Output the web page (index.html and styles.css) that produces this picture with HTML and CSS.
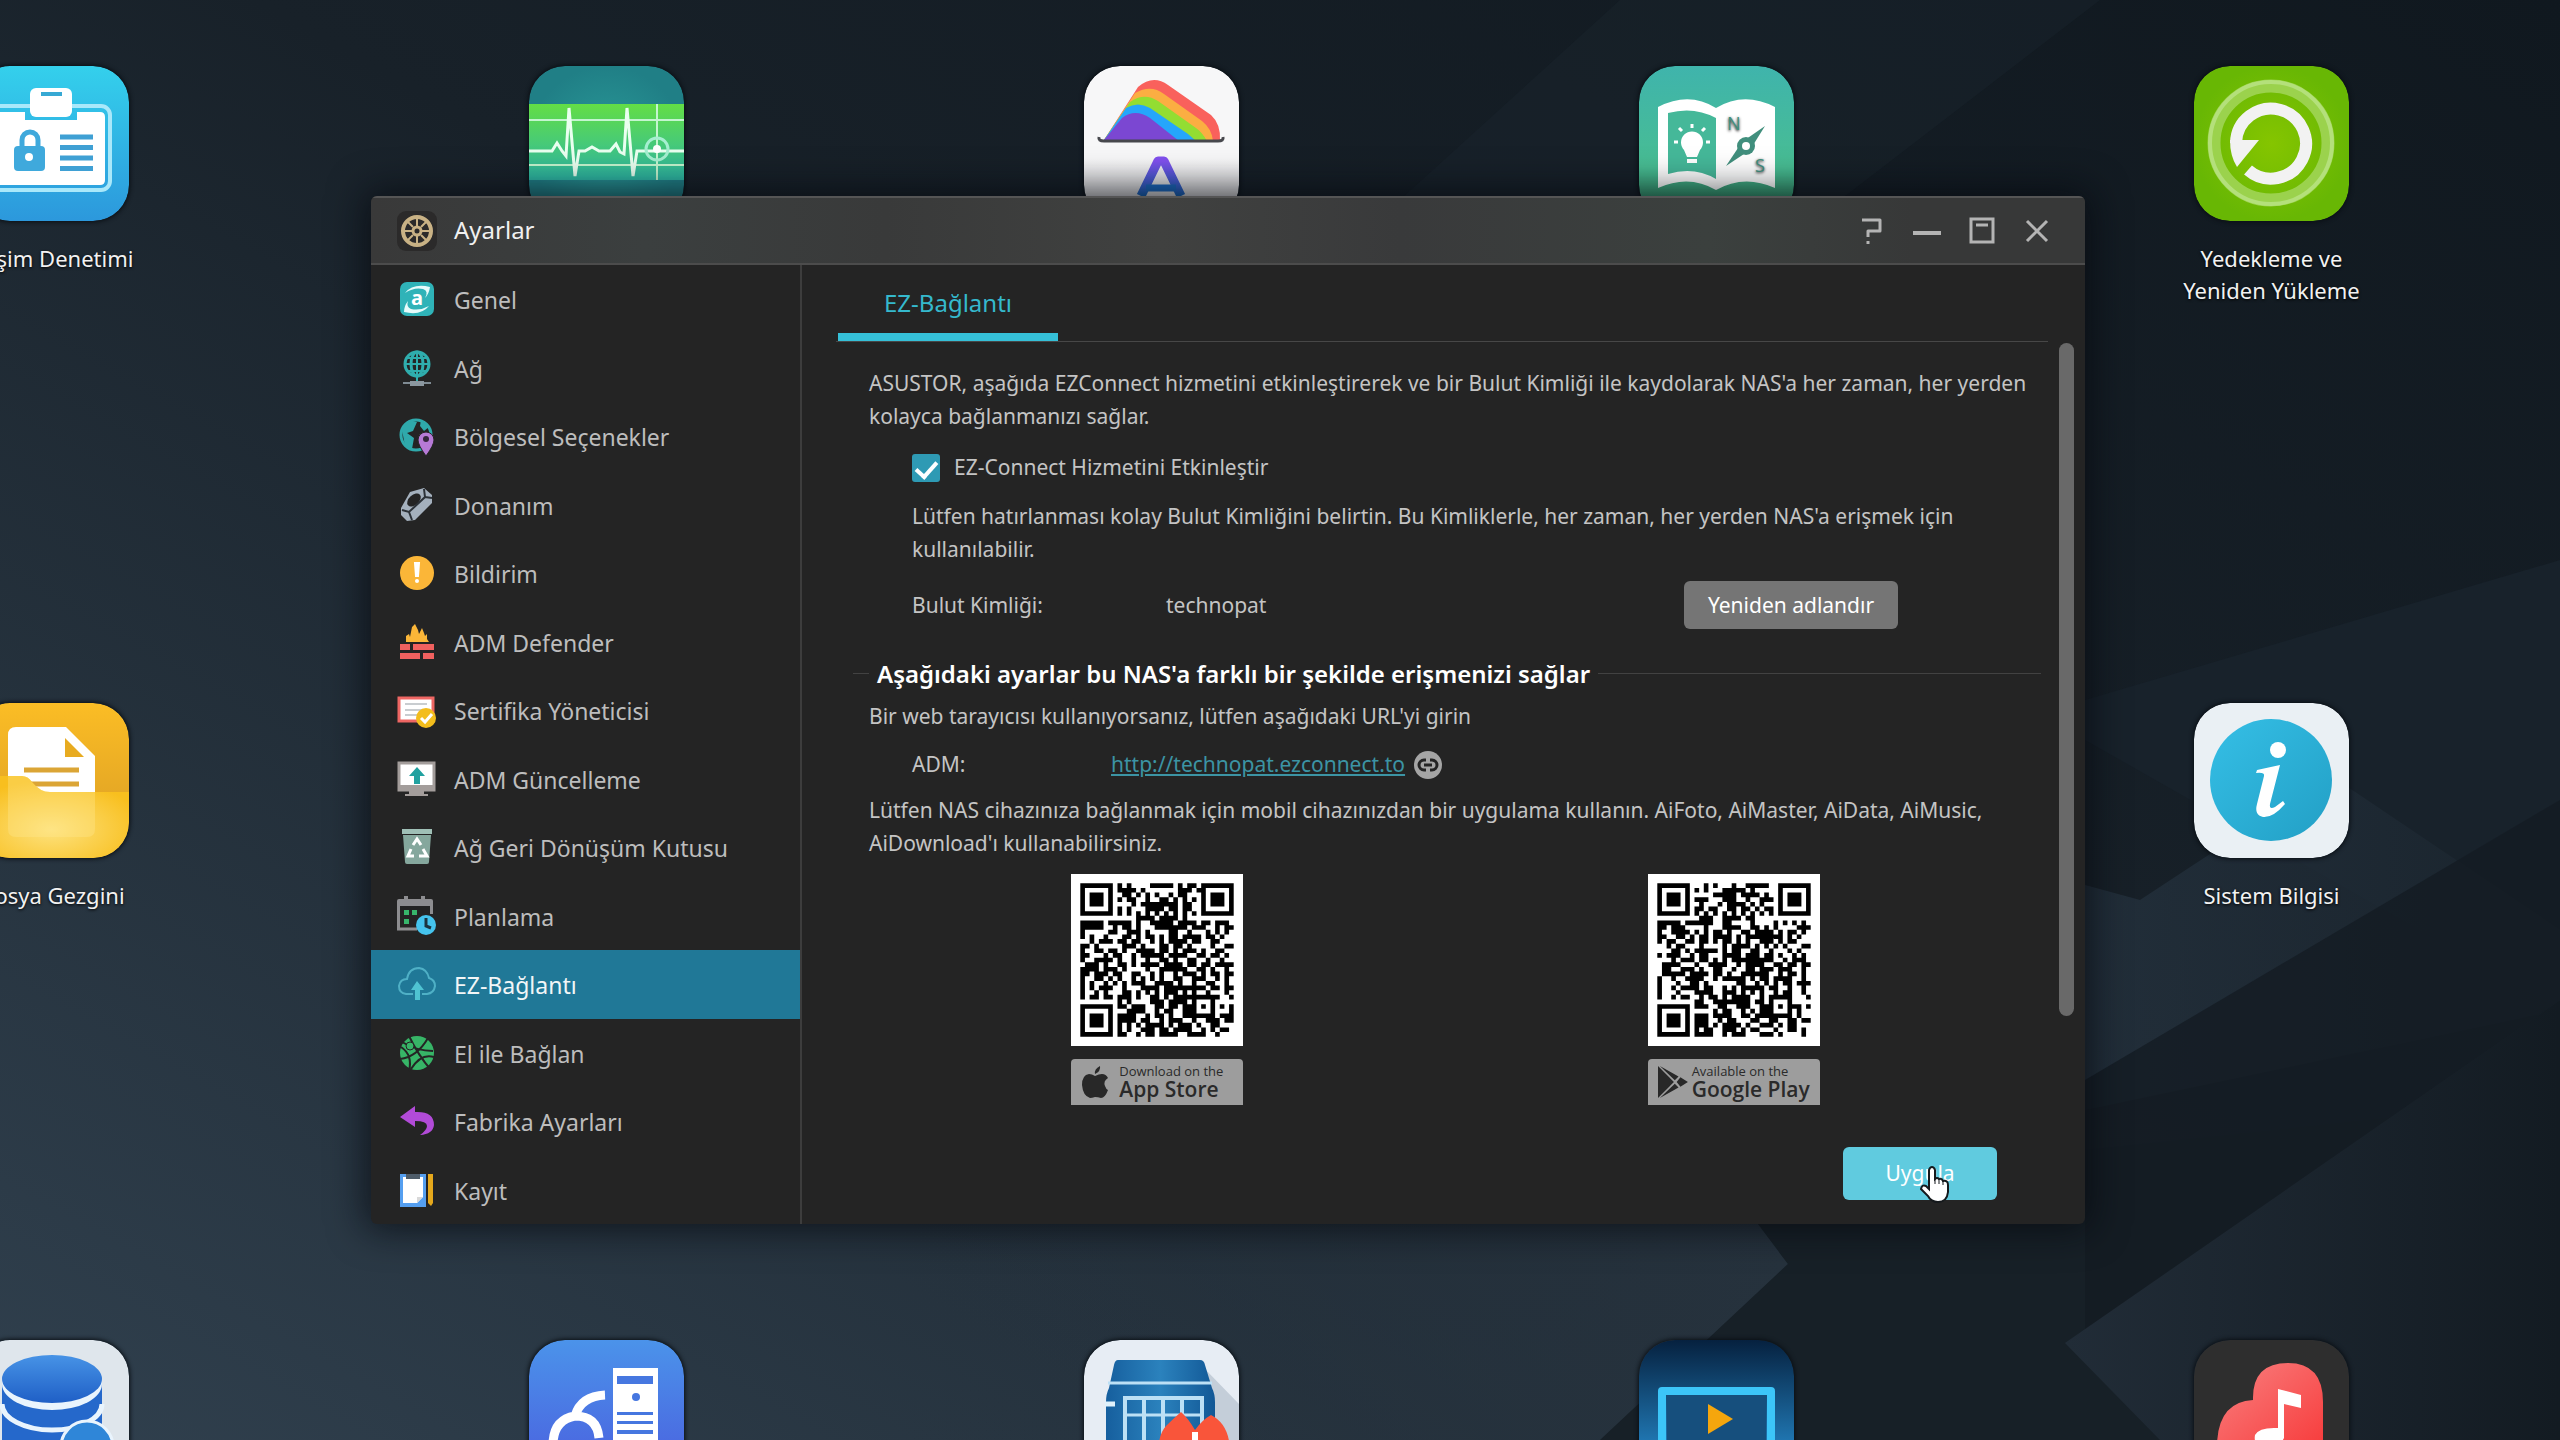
FILE: index.html
```html
<!DOCTYPE html>
<html lang="tr">
<head>
<meta charset="utf-8">
<title>ADM - Ayarlar</title>
<link rel="stylesheet" href="styles.css">
<script src="qr.js" defer></script>
</head>
<body>
<div class="desktop">
  <svg class="wallpaper" viewBox="0 0 2560 1440" preserveAspectRatio="none" aria-hidden="true">
    <defs>
      <linearGradient id="w1" x1="1" y1="0" x2="0" y2="1"><stop offset="0" stop-color="#10181f"/><stop offset=".45" stop-color="#182129"/><stop offset="1" stop-color="#30404e"/></linearGradient>
      <linearGradient id="w3" x1="0" y1="0" x2="1" y2="0"><stop offset="0" stop-color="#212c37"/><stop offset="1" stop-color="#131b22"/></linearGradient>
      <linearGradient id="w4" x1="0" y1="0" x2="1" y2="0"><stop offset="0" stop-color="#273440" stop-opacity="0"/><stop offset="1" stop-color="#26323d"/></linearGradient>
      <linearGradient id="w5" x1="0" y1="0" x2="1" y2="0"><stop offset="0" stop-color="#263441"/><stop offset="1" stop-color="#1b252e"/></linearGradient>
    </defs>
    <rect width="2560" height="1440" fill="url(#w1)"/>
    <path d="M1400 200 1620 0H2100L1840 200Z" fill="#1e2832" opacity=".35"/>
    <path d="M900 1200H1740L1788 1264 1600 1440H900Z" fill="url(#w4)"/>
    <path d="M1740 1200 1788 1264 1600 1440H2560V1100L2085 1150V1200Z" fill="#172027"/>
    <path d="M2085 740 2560 1010V560L2085 700Z" fill="#18222b"/>
    <path d="M2085 885 2140 900 2330 775 2560 930V1010L2085 1110Z" fill="url(#w5)" opacity=".7"/>
    <path d="M2085 1080 2560 800V1000L2085 1330Z" fill="#141c23" opacity=".8"/>
    <path d="M2065 1343 2560 1000V1440H2160Z" fill="url(#w3)"/>
  </svg>

  <main class="apps">
    <a class="app" href="#erisim"><svg viewBox="0 0 155 155"><defs><linearGradient id="a1" x1="0" y1="0" x2="0" y2="1"><stop offset="0" stop-color="#34d0ec"/><stop offset="1" stop-color="#2c98dc"/></linearGradient></defs><rect width="155" height="155" rx="36" fill="url(#a1)"/><rect x="14" y="40" width="122" height="84" rx="9" fill="none" stroke="#a9e8fa" stroke-width="4"/><path d="M24 46H51V54H103V46H126Q131 46 131 51V114Q131 119 126 119H24Q19 119 19 114V51Q19 46 24 46Z" fill="#fff"/><rect x="56" y="22" width="42" height="29" rx="6" fill="#fff"/><rect x="67" y="26" width="21" height="4" fill="#37a9d4"/><rect x="40" y="80" width="31" height="25" rx="4" fill="#3fa9dc"/><path d="M48 82V74a8 8 0 0 1 16 0V82" fill="none" stroke="#3fa9dc" stroke-width="5"/><circle cx="55" cy="91" r="4" fill="#fff"/><path d="M86 71H119M86 81.500H119M86 92H119M86 102.500H119" stroke="#3fa0d4" stroke-width="5"/></svg><span>Erişim Denetimi</span></a>

    <a class="app" href="#etkinlik" aria-label="Etkinlik Monitörü"><svg viewBox="0 0 155 155"><defs><linearGradient id="a2" x1="0" y1="0" x2="0" y2="1"><stop offset="0" stop-color="#63de45"/><stop offset="1" stop-color="#2db7a6"/></linearGradient><radialGradient id="a2b"><stop offset="0" stop-color="#2a9a98"/><stop offset="1" stop-color="#207f86"/></radialGradient></defs><rect width="155" height="155" rx="36" fill="url(#a2b)"/><rect y="38" width="155" height="76" fill="url(#a2)"/><path d="M0 54H155M0 99H155M128 38V114" stroke="#c4f5cf" stroke-width="2"/><path d="M0 85H23L28 77 33 85 37 90 40 42 46 110 50 85H56L63 81 70 85H81L87 78 91 86 95 88 98 42 104 110 108 85H155" fill="none" stroke="#eafff0" stroke-width="3"/><circle cx="128" cy="83" r="11" fill="none" stroke="#a5efd0" stroke-width="3"/><circle cx="128" cy="83" r="4" fill="#fff"/></svg></a>

    <a class="app" href="#appcentral" aria-label="App Central"><svg viewBox="0 0 155 155"><defs><linearGradient id="a3" x1="0" y1="0" x2="0" y2="1"><stop offset="0" stop-color="#8150ee"/><stop offset="1" stop-color="#1665b8"/></linearGradient><linearGradient id="a3b" x1="0" y1="0" x2="0" y2="1"><stop offset=".6" stop-color="#f7f7f8"/><stop offset=".85" stop-color="#cfcfd2"/></linearGradient></defs><rect width="155" height="155" rx="36" fill="url(#a3b)"/><path d="M20 74 54 21Q69 8 84 19L127 49Q137 58 136 75Z" fill="#f9615c"/><path d="M20 74 51 27Q67 18 80 28L118 55Q128 63 129 75Z" fill="#fbae42"/><path d="M20 74 46 36Q60 26 74 35L112 62Q118 66 123 75Z" fill="#93dd32"/><path d="M20 74 42 42Q54 35 66 42L104 68 112 75H20Z" fill="#25a6fb"/><path d="M20 74 38 52Q51 42 66 52L95 75Z" fill="#7b47d2"/><path d="M15 71Q14 75 20 75H134Q140 75 139 71" fill="none" stroke="#47484d" stroke-width="3"/><path d="M57 130 74 95H80L97 130" fill="none" stroke="url(#a3)" stroke-width="9" stroke-linejoin="round"/><path d="M62 122H92" stroke="#1c68be" stroke-width="7"/></svg></a>

    <a class="app" href="#yardim" aria-label="Yardım"><svg viewBox="0 0 155 155"><defs><linearGradient id="a4" x1="0" y1="0" x2="0" y2="1"><stop offset="0" stop-color="#3fb4ac"/><stop offset=".65" stop-color="#48bd93"/><stop offset=".85" stop-color="#379a72"/></linearGradient></defs><rect width="155" height="155" rx="36" fill="url(#a4)"/><path d="M19 41Q50 25 77 42 105 25 136 41V122Q105 108 77 124 50 108 19 122Z" fill="#fff"/><path d="M29 47Q55 40 77 52V113Q55 100 29 108Z" fill="#45b899"/><path d="M45 84a11 11 0 1 1 16 0L58 91H48ZM48 93H58V97H48Z" fill="#fff"/><path d="M53 58V62M40 62 43 65M66 62 63 65M35 76H39M67 76H71" stroke="#fff" stroke-width="3"/><path d="M126 60 111 84 87 100 103 76Z" fill="#418f7d"/><circle cx="107" cy="80" r="9" fill="#418f7d"/><circle cx="107" cy="80" r="4" fill="#fff"/><text x="88" y="64" class="compass">N</text><text x="116" y="106" class="compass">S</text></svg></a>

    <a class="app" href="#yedek"><svg viewBox="0 0 155 155"><defs><radialGradient id="a5"><stop offset="0" stop-color="#85c500"/><stop offset="1" stop-color="#68b704"/></radialGradient></defs><rect width="155" height="155" rx="36" fill="url(#a5)"/><circle cx="77" cy="77" r="57" fill="none" stroke="#9bd24d" stroke-width="13"/><circle cx="77" cy="77" r="61" fill="none" stroke="#b4e07b" stroke-width="4"/><path d="M54 104a35 35 0 1 0-12-27" fill="none" stroke="#f2f2f2" stroke-width="12"/><path d="M36 74H65L43 101Q36 90 36 74Z" fill="#f2f2f2"/></svg><span>Yedekleme ve<br>Yeniden Yükleme</span></a>

    <a class="app app-first" href="#dosya"><svg viewBox="0 0 155 155"><defs><linearGradient id="a6" x1="0" y1="0" x2="0" y2="1"><stop offset="0" stop-color="#fbbd25"/><stop offset="1" stop-color="#d79a25"/></linearGradient><radialGradient id="a6b" cy=".65" r=".6"><stop offset="0" stop-color="#fde27e"/><stop offset="1" stop-color="#f8bf1e"/></radialGradient></defs><rect width="155" height="155" rx="36" fill="url(#a6)"/><path d="M42 24H92L121 53V130H34V32Q34 24 42 24Z" fill="#fff"/><path d="M91 35V54H110Z" fill="#e8ab20"/><path d="M50 67H105M50 81H105" stroke="#dba535" stroke-width="5"/><path d="M0 73H48Q54 73 58 79 66 89 76 89H155V119Q155 155 119 155H36Q0 155 0 119Z" fill="url(#a6b)"/><path d="M34 73H48Q54 73 58 79 66 89 76 89H121V126Q121 134 113 134H42Q34 134 34 126Z" fill="#fee88e" opacity=".35"/></svg><span>Dosya Gezgini</span></a>

    <a class="app app-last" href="#sistem"><svg viewBox="0 0 155 155"><defs><linearGradient id="a7" x1="0" y1="0" x2="1" y2="1"><stop offset="0" stop-color="#35bfe6"/><stop offset="1" stop-color="#229fc5"/></linearGradient></defs><rect width="155" height="155" rx="36" fill="#eaf0f4"/><circle cx="77" cy="77" r="61" fill="url(#a7)"/><circle cx="84" cy="47" r="8" fill="#fff"/><path d="M63 67 86 62 76 101Q75 107 81 104L89 98 91 101Q79 115 69 114 60 112 63 101L70 73Q71 69 62 70Z" fill="#fff"/></svg><span>Sistem Bilgisi</span></a>

    <a class="app" href="#depolama" aria-label="Depolama"><svg viewBox="0 0 155 155"><defs><linearGradient id="a8" x1="0" y1="0" x2="0" y2="1"><stop offset="0" stop-color="#4793e6"/><stop offset="1" stop-color="#1f5fc6"/></linearGradient></defs><rect width="155" height="155" rx="36" fill="#dfe6ec"/><path d="M28 39H128V155H28Z" fill="#2568cb"/><path d="M28 44a50 26 0 0 0 100 0V39H28Z" fill="#e9f4fd"/><path d="M28 64a50 26 0 0 0 100 0" fill="none" stroke="#e9f4fd" stroke-width="5"/><ellipse cx="78" cy="39" rx="50" ry="24" fill="url(#a8)"/><circle cx="113" cy="107" r="26" fill="#2f86d8" stroke="#e9f4fd" stroke-width="3"/></svg></a>

    <a class="app" href="#ezsync" aria-label="EZ Sync"><svg viewBox="0 0 155 155"><defs><linearGradient id="a9" x1="0" y1="0" x2="0" y2="1"><stop offset="0" stop-color="#4b93ea"/><stop offset="1" stop-color="#4a58dd"/></linearGradient></defs><rect width="155" height="155" rx="36" fill="url(#a9)"/><path d="M84 28H129V120H84Z" fill="#fff"/><path d="M88 36H124V44H88ZM88 72H124V75H88ZM88 81H124V84H88ZM88 90H124V94H88Z" fill="#4677e0"/><circle cx="107" cy="57" r="4" fill="#4677e0"/><path d="M76 55Q52 56 46 76M70 98Q68 76 46 76 24 80 24 105" fill="none" stroke="#fff" stroke-width="9"/></svg></a>

    <a class="app" href="#surveillance" aria-label="Surveillance"><svg viewBox="0 0 155 155"><defs><linearGradient id="a10"><stop offset="0" stop-color="#165f9e"/><stop offset=".5" stop-color="#2b82bd"/><stop offset="1" stop-color="#125896"/></linearGradient></defs><rect width="155" height="155" rx="36" fill="#e7edf4"/><path d="M120 28 155 64V155H130Z" fill="#c4ced9"/><path d="M34 20H116Q120 20 121 25L128 48Q131 54 131 62V155H22V62Q22 54 25 48L30 25Q31 20 34 20Z" fill="url(#a10)"/><path d="M24 43H128" stroke="#bce0f5" stroke-width="3"/><path d="M41 110V58H118V110M60 58V100M79 58V100M98 58V100" fill="none" stroke="#bce0f5" stroke-width="4"/><path d="M41 75H118" stroke="#bce0f5" stroke-width="3"/><path d="M21 64H31" stroke="#dff1fb" stroke-width="5"/><path d="M82 86Q90 78 97 72 104 78 111 90 118 80 127 75 145 84 146 110H75Q74 95 82 86Z" fill="#f9553a"/><path d="M111 92V110" stroke="#fff" stroke-width="6"/></svg></a>

    <a class="app" href="#looksgood" aria-label="LooksGood"><svg viewBox="0 0 155 155"><defs><linearGradient id="a11" x1="0" y1="0" x2="0" y2="1"><stop offset="0" stop-color="#06213f"/><stop offset=".7" stop-color="#217bb8"/></linearGradient></defs><rect width="155" height="155" rx="36" fill="url(#a11)"/><path d="M23 120V51H132V120" fill="none" stroke="#3cc5f8" stroke-width="8" stroke-linejoin="round"/><path d="M28 56H127V120H28Z" fill="#164f7d"/><path d="M69 64V94L94 79Z" fill="#f5a60d"/></svg></a>

    <a class="app" href="#soundsgood" aria-label="SoundsGood"><svg viewBox="0 0 155 155"><defs><linearGradient id="a12" x1="0" y1="0" x2="1" y2="1"><stop offset="0" stop-color="#f98080"/><stop offset="1" stop-color="#f73b3b"/></linearGradient></defs><rect width="155" height="155" rx="36" fill="#2e2e2e"/><path d="M23 110Q22 62 59 60 58 23 94 23 129 23 129 62V110Z" fill="url(#a12)"/><path d="M84 49 107 55V68L90 64V98Q84 110 71 108 59 106 61 95 65 87 84 88Z" fill="#fff"/></svg></a>
  </main>

  <section class="window" aria-label="Ayarlar">
    <header class="titlebar">
      <svg class="title-icon" viewBox="0 0 40 40"><rect width="40" height="40" rx="9" fill="#2b2a2a"/><circle cx="20" cy="20" r="14" fill="none" stroke="#c9b285" stroke-width="4"/><circle cx="20" cy="20" r="4" fill="none" stroke="#c9b285" stroke-width="3"/><path d="M20 15V7M20 25V33M15 20H7M25 20H33M16 16 11 11M24 24 29 29M24 16 29 11M16 24 11 29" stroke="#c9b285" stroke-width="2"/></svg>
      <h1>Ayarlar</h1>
      <div class="window-buttons">
        <button type="button" aria-label="Yardım"><svg viewBox="0 0 28 28"><path d="M4 3H22V14H10V20M10 24V27" fill="none" stroke="#b4b4b4" stroke-width="3" stroke-linejoin="round"/></svg></button>
        <button type="button" aria-label="Küçült"><svg viewBox="0 0 28 28"><path d="M0 16H28" stroke="#b4b4b4" stroke-width="4"/></svg></button>
        <button type="button" aria-label="Büyüt"><svg viewBox="0 0 28 28"><path d="M3 2H25V25H3ZM8 8H20" fill="none" stroke="#b4b4b4" stroke-width="3"/></svg></button>
        <button type="button" aria-label="Kapat"><svg viewBox="0 0 28 28"><path d="M4 4 24 24M24 4 4 24" stroke="#b4b4b4" stroke-width="3"/></svg></button>
      </div>
    </header>

    <div class="body">
      <nav class="sidebar">
        <a href="#genel"><svg viewBox="0 0 40 40"><rect x="3" y="3" width="34" height="34" rx="7" fill="#2fb3b8"/><path d="M8 14Q16 4 33 8 32 15 28 19 32 12 26 10 17 8 8 14ZM32 27Q24 37 7 33 7 27 11 22 9 28 14 30 23 32 32 27Z" fill="#e6fbfb"/><text x="14" y="26" class="glyph-a">a</text></svg><span>Genel</span></a>
        <a href="#ag"><svg viewBox="0 0 40 40"><circle cx="20" cy="16" r="12" fill="none" stroke="#2fadad" stroke-width="3"/><ellipse cx="20" cy="16" rx="6" ry="12" fill="none" stroke="#2fadad" stroke-width="3"/><path d="M20 4V34M7 16H33M9 10H31M9 23H31" stroke="#2fadad" stroke-width="2"/><path d="M6 35H34" stroke="#7f8b93" stroke-width="2"/><rect x="13" y="33" width="14" height="5" fill="#8b979f"/></svg><span>Ağ</span></a>
        <a href="#bolgesel"><svg viewBox="0 0 40 40"><circle cx="19" cy="19" r="15" fill="none" stroke="#2fa9ab" stroke-width="3"/><path d="M5 14 12 4 20 6 16 15 10 17 17 22 15 33 8 30ZM24 4 32 11 27 15 23 10Z" fill="#2fa9ab"/><path d="M29 16a8 8 0 0 1 8 8Q37 29 29 40 21 29 21 24a8 8 0 0 1 8-8Z" fill="#b67ad6" stroke="#242424"/><circle cx="29" cy="23" r="3" fill="#34263c"/></svg><span>Bölgesel Seçenekler</span></a>
        <a href="#donanim"><svg viewBox="0 0 40 40"><path d="M4 23 13 7 27 3 35 10V18L18 35 10 36 4 30Z" fill="#a4b0bd"/><ellipse cx="17" cy="15" rx="8" ry="5" transform="rotate(-42 17 15)" fill="#242424"/><path d="M5 25 12 27 28 12 27 4M12 27 15 35M28 12 35 13" fill="none" stroke="#2c3238" stroke-width="2"/></svg><span>Donanım</span></a>
        <a href="#bildirim"><svg viewBox="0 0 40 40"><circle cx="20" cy="20" r="17" fill="#fbb638"/><path d="M18 10H22L21 23H19Z" stroke="#fff" stroke-width="2" fill="#fff"/><circle cx="20" cy="28" r="2" fill="#fff"/></svg><span>Bildirim</span></a>
        <a href="#defender"><svg viewBox="0 0 40 40"><path d="M9 20 9 14 12 12 13 15 15 5 18 2 21 8 22 12 25 6 27 11 28 14 30 12V17L32 20Z" fill="#fbb638"/><path d="M3 22H13V28H3ZM16 22H37V28H16ZM3 31H23V37H3ZM26 31H37V37H26Z" fill="#f0615f"/></svg><span>ADM Defender</span></a>
        <a href="#sertifika"><svg viewBox="0 0 40 40"><rect x="2" y="8" width="34" height="23" fill="#fff" stroke="#ee6663" stroke-width="3"/><path d="M8 14H30M8 20H28M8 25H22" stroke="#c9cdd0" stroke-width="2"/><circle cx="29" cy="28" r="10" fill="#f3bd1c"/><path d="M24 28 28 32 35 24" fill="none" stroke="#fff" stroke-width="3"/></svg><span>Sertifika Yöneticisi</span></a>
        <a href="#guncelleme"><svg viewBox="0 0 40 40"><rect x="2" y="4" width="35" height="27" fill="#fff" stroke="#a39d9b" stroke-width="3"/><path d="M1 26H38V32H1Z" fill="#a39d9b"/><path d="M12 32H27V35H31V37H8V35H12Z" fill="#a39d9b"/><path d="M20 8 28 17H23V25H17V17H12Z" fill="#21a1a0"/></svg><span>ADM Güncelleme</span></a>
        <a href="#kutu"><svg viewBox="0 0 40 40"><path d="M5 2H35V7H5Z" fill="#9fbfb6"/><path d="M6 8H34L32 35Q32 37 30 37H10Q8 37 8 35Z" fill="#85a79d"/><path d="M16 18 20 12 24 18M14 22 11 29H17M26 22 30 29H22" fill="none" stroke="#fff" stroke-width="3"/></svg><span>Ağ Geri Dönüşüm Kutusu</span></a>
        <a href="#planlama"><svg viewBox="0 0 40 40"><path d="M0 5Q0 3 2 3H34Q36 3 36 5V10H0Z" fill="#8d8d90"/><path d="M7 0H11V6H7ZM24 0H28V6H24Z" fill="#8d8d90"/><path d="M1.500 8V33H20M34.500 8V18" fill="none" stroke="#8d8d90" stroke-width="3"/><path d="M7 14H12V19H7ZM15 14H20V19H15ZM7 23H12V28H7Z" fill="#37b56b"/><circle cx="29" cy="29" r="10" fill="#45c4ee"/><path d="M29 22V30L34 32" fill="none" stroke="#1b3440" stroke-width="3"/></svg><span>Planlama</span></a>
        <a href="#ez" class="selected" aria-current="page"><svg viewBox="0 0 40 40"><path d="M16 30H9Q2 29 2 22 3 15 10 15 12 4 22 4 30 5 32 14 38 16 38 22 37 29 30 30H25" fill="none" stroke="#4fb0c6" stroke-width="2"/><path d="M20 17 27 26H23V36H18V26H14Z" fill="#4fc3d2"/></svg><span>EZ-Bağlantı</span></a>
        <a href="#elile"><svg viewBox="0 0 40 40"><circle cx="20" cy="20" r="17" fill="#37b567"/><path d="M12 3Q21 22 34 37M3 26Q20 24 31 5M5 9Q20 18 36 18M4 14Q16 22 12 38M14 36Q24 20 37 24" fill="none" stroke="#242424" stroke-width="2"/><circle cx="13" cy="13" r="4" fill="#37b567" stroke="#242424"/></svg><span>El ile Bağlan</span></a>
        <a href="#fabrika"><svg viewBox="0 0 40 40"><path d="M3 16 18 5V11Q37 10 37 24 36 33 23 34 30 29 30 25 30 20 18 20V26Z" fill="#b24bd8"/></svg><span>Fabrika Ayarları</span></a>
        <a href="#kayit"><svg viewBox="0 0 40 40"><rect x="3" y="4" width="26" height="33" fill="#559ff0"/><path d="M6 7H26V27L20 33H6Z" fill="#fff"/><path d="M26 27H20V33Z" fill="#d9d9d9"/><rect x="9" y="4" width="14" height="5" fill="#4e5c69"/><path d="M31 4H36V33L34 36 31 33Z" fill="#e5a81c"/></svg><span>Kayıt</span></a>
      </nav>

      <div class="pane">
        <div class="tabs" role="tablist"><button type="button" role="tab" aria-selected="true">EZ-Bağlantı</button></div>
        <form class="content" id="ez-form">
          <p class="intro">ASUSTOR, aşağıda EZConnect hizmetini etkinleştirerek ve bir Bulut Kimliği ile kaydolarak NAS'a her zaman, her yerden kolayca bağlanmanızı sağlar.</p>
          <div class="indent">
            <label class="enable"><input type="checkbox" checked>EZ-Connect Hizmetini Etkinleştir</label>
            <p>Lütfen hatırlanması kolay Bulut Kimliğini belirtin. Bu Kimliklerle, her zaman, her yerden NAS'a erişmek için kullanılabilir.</p>
            <div class="cloud-id"><span class="name">Bulut Kimliği:</span><span>technopat</span><button type="button" class="rename">Yeniden adlandır</button></div>
          </div>
          <h2>Aşağıdaki ayarlar bu NAS'a farklı bir şekilde erişmenizi sağlar</h2>
          <p class="web">Bir web tarayıcısı kullanıyorsanız, lütfen aşağıdaki URL'yi girin</p>
          <div class="address"><span class="name">ADM:</span><a href="http://technopat.ezconnect.to">http://technopat.ezconnect.to</a><svg viewBox="0 0 28 28"><circle cx="14" cy="14" r="14" fill="#a5a5a5"/><path d="M12 9H10a5 5 0 0 0 0 10H12M16 9H18a5 5 0 0 1 0 10H16M10 14H18" fill="none" stroke="#242424" stroke-width="3"/></svg></div>
          <p class="mobile">Lütfen NAS cihazınıza bağlanmak için mobil cihazınızdan bir uygulama kullanın. AiFoto, AiMaster, AiData, AiMusic, AiDownload'ı kullanabilirsiniz.</p>
          <div class="stores">
            <div class="store">
              <svg class="qr" id="qr-ios" viewBox="-2 -2 37 37" role="img" aria-label="App Store QR"></svg>
              <a class="badge" href="#appstore"><svg viewBox="0 0 28 34"><path d="M19 1Q20 6 14 9 13 4 19 1ZM14 11Q18 9 21 9 25 9 27 13 22 16 24 21 25 24 27 25 24 33 20 33 17 32 14 32 11 33 9 33 2 31 1 20 1 10 8 9 11 9 14 11Z" fill="#282828"/></svg><span class="badge-text"><small>Download on the</small><b>App Store</b></span></a>
            </div>
            <div class="store">
              <svg class="qr" id="qr-android" viewBox="-2 -2 37 37" role="img" aria-label="Google Play QR"></svg>
              <a class="badge badge-play" href="#googleplay"><svg viewBox="0 0 32 34"><path d="M0 0V34L17 17Z" fill="#282828"/><path d="M2 0 18 15 22 11ZM2 34 18 19 22 23ZM20 17 24 12 32 17 24 22Z" fill="#282828"/></svg><span class="badge-text"><small>Available on the</small><b>Google Play</b></span></a>
            </div>
          </div>
        </form>
        <div class="scrollbar" aria-hidden="true"></div>
        <footer class="actions"><button type="submit" form="ez-form" class="apply">Uygula<svg class="cursor" viewBox="0 0 30 38" aria-hidden="true"><path d="M9 20V4Q10 1 12 1T15 4V13Q17 11 19 13 22 12 23 15 28 14 28 19V26Q27 36 18 36 11 36 8 30L1 23Q2 18 6 20L9 23Z" fill="#fff" stroke="#15191c" stroke-width="2"/><path d="M15 12V18M19 13V18M23 15V19" stroke="#15191c" stroke-width="1"/></svg></button></footer>
      </div>
    </div>
  </section>
</div>
</body>
</html>
```
FILE: qr.js
```js
// Version 4 QR codes, 33 x 33 modules. Finder, timing and alignment
// patterns are drawn by code; the rows below hold the data modules.
const SIZE = 33;

const codes = {
  'qr-ios': [
    '........#.#....#####.#.##........',
    '........####.#.......###.#.......',
    '.........##.#.#.#..#.##..........',
    '........#.##..#..##.#.#.#........',
    '...........#.########.##.........',
    '........#.#...####.##.##.........',
    '........#.#.#.#.#.#.#.#.#........',
    '............####.####.#..........',
    '#####.#####.#..#####.####.##.###.',
    '#####..#.##.#...#######.###..#.##',
    '#.....##..###.#....##..#...#.#.#.',
    '#.#..##..##.#.##.#.##.####.##.#..',
    '..#.###.##.##..#.#.####.##..##...',
    '##.#..#..###.#...##.##.#....#..##',
    '#..##.##.#..####.##.#.###.#..##..',
    '##...####..#.#####.####..##.##.#.',
    '#..####.#..#..#..##.#..##..#..#..',
    '.###.##.##.#.####.####.##.##.####',
    '####.###.#....#..######..##.#..#.',
    '##.###.##..##..#.#..#.###.#.##.##',
    '#..##...#..#.#.#.#..##..###..#.#.',
    '#.#..###.#.###..####.#..#..##..#.',
    '#.#.###..#...####.#########.##.##',
    '#..#.##..##.#.#.#.###.#.#..#...#.',
    '#.##.#..###.#..##.#.######.###..#',
    '........#.#....###.####..........',
    '........##.###..##.##.###.....#.#',
    '..........####..#.##..###.......#',
    '........####..#.##.#..#####...###',
    '........####.##..#.###..#..###.##',
    '........#.#.#.####.#.###.#..##...',
    '........#.#..###.##.####..#.#.##.',
    '........##..#.##.####..####..#...'
  ],
  'qr-android': [
    '..........#.#...#..#####.........',
    '........#.#...#####.#............',
    '............#####.####.#.........',
    '........###...###..#..###........',
    '.........#...#.####.#.#..........',
    '........##.##..##.##.#.##........',
    '........#.#.#.#.#.#.#.#.#........',
    '.........###..####.##............',
    '#####.######..##....#....#.#.#.#.',
    '##.###....#...####..##.#.#....###',
    '#..####.#.#.##.#..##.####.#.##.#.',
    '##..##.#.##.####.#.########.#.#..',
    '#.##...#.##.#.##.#.#..###.#.##...',
    '..#.###..#....#.####.#.#.#.#...##',
    '...##.#.#####.#.##..##..#...#.#..',
    '#.###.##.##...####.###.##.#..#.#.',
    '...#.#.#.##.#.#.#########..#.###.',
    '.####.#.#..####..#.####..##.##.##',
    '.##..#.#.#..##..#..##.###.###..#.',
    '.#####.####.##.#..######..#.##.#.',
    '#..#...###..#.#####.#.##.####..#.',
    '#...#.###.#......##..#.#.#.##.###',
    '#..#.#.##.##..#.#.#####.##..#..#.',
    '#...#.#.####..###.#.#.#..#.##..#.',
    '#..#.##..#.##.#.####..#.#####...#',
    '........##..########.##..........',
    '........###..##..###..##.....##.#',
    '............#.##..#.#.##......#..',
    '........###.####..##.######...#..',
    '........###..#.##...##..##..##.##',
    '........###.#.####.#..###.#.##...',
    '........#.##..###.#.##...#..##.#.',
    '........####..#.###...###.#....#.'
  ]
};

function ring(cells, x, y, size) {
  const mid = (size - 1) / 2;
  for (let r = 0; r < size; r++) {
    for (let c = 0; c < size; c++) {
      const d = Math.max(Math.abs(r - mid), Math.abs(c - mid));
      cells[y + r][x + c] = d !== mid - 1;
    }
  }
}

for (const [id, rows] of Object.entries(codes)) {
  const cells = rows.map(row => Array.from({ length: SIZE }, (_, c) => row[c] === '#'));
  ring(cells, 0, 0, 7);
  ring(cells, SIZE - 7, 0, 7);
  ring(cells, 0, SIZE - 7, 7);
  ring(cells, 24, 24, 5);
  for (let i = 8; i < SIZE - 8; i++) {
    cells[6][i] = cells[i][6] = i % 2 === 0;
  }
  let d = '';
  cells.forEach((row, y) => row.forEach((on, x) => {
    if (on) d += `M${x} ${y}h1v1h-1z`;
  }));
  const path = document.createElementNS('http://www.w3.org/2000/svg', 'path');
  path.setAttribute('d', d);
  document.getElementById(id).append(path);
}
```
FILE: styles.css
```css
* { box-sizing: border-box; }

body {
  margin: 0;
  overflow: hidden;
  background: #18212a;
  color: #c4c4c4;
  font: 21px/33px "Noto Sans", "Open Sans", sans-serif;
}

h1, h2, p { margin: 0; font-weight: 400; }
a { color: inherit; text-decoration: none; }
button { border: 0; background: none; color: inherit; font: inherit; padding: 0; }

.desktop { position: relative; height: 100vh; overflow: hidden; }
.wallpaper { position: absolute; inset: 0; width: 100%; height: 100%; }

/* app grid: the first column runs past the left edge of the screen */
.apps {
  position: relative;
  display: grid;
  grid-template-columns: repeat(5, 1fr);
  grid-auto-rows: 637px;
  margin: 0 11px 0 -226px;
  padding-top: 66px;
}
.app {
  display: flex;
  flex-direction: column;
  align-items: center;
  gap: 21px;
  color: #f2f2f2;
  font-size: 22px;
  line-height: 32px;
  text-align: center;
  text-shadow: 0 1px 3px #000;
}
.app svg { width: 155px; height: 155px; border-radius: 36px; box-shadow: 0 0 4px 1px #0a0f14; }
.app-first { grid-column: 1; }
.app-last { grid-column: 5; }
.compass { font: 400 18px "Open Sans", sans-serif; fill: #418f7d; }

.window {
  position: absolute;
  top: 196px;
  left: 371px;
  right: 475px;
  min-height: 1028px;
  display: flex;
  flex-direction: column;
  border-radius: 6px;
  overflow: hidden;
  background: #242424;
  box-shadow: 0 0 36px 6px rgba(5, 9, 14, .7);
}
.titlebar {
  display: flex;
  align-items: center;
  gap: 17px;
  height: 69px;
  padding: 0 34px 0 26px;
  background: linear-gradient(90deg, #393939, #3b3f3f 16%, #393a3a 30%, #404140 46%, #393a3b 60%, #3b403e 78%, #373838 90%);
  border-top: 2px solid #555;
  border-bottom: 2px solid #4c4c4c;
}
.title-icon { width: 40px; height: 40px; }
.titlebar h1 { color: #f0f0f0; font-size: 24px; flex: 1; padding-bottom: 2px; }
.window-buttons { display: flex; gap: 27px; }
.window-buttons button, .window-buttons svg { display: block; width: 28px; height: 28px; }

.body { flex: 1; display: grid; grid-template-columns: 431px 1fr; }
.sidebar { display: flex; flex-direction: column; border-right: 2px solid #3d3d3d; }
.sidebar a {
  flex: 1;
  display: flex;
  align-items: center;
  gap: 17px;
  padding-left: 26px;
  font-size: 23px;
  color: #bdbdbd;
}
.sidebar svg { width: 40px; height: 40px; }
.sidebar span { padding-top: 3px; }
.sidebar .selected { background: #207897; color: #f2f6f7; }
.glyph-a { font: 700 20px "Open Sans", sans-serif; fill: #fff; }

.pane {
  display: grid;
  grid-template-columns: 1fr 15px;
  grid-template-rows: 77px 1fr auto;
  column-gap: 11px;
  padding: 0 11px 24px 34px;
}
.tabs { border-bottom: 1px solid #474747; display: flex; align-items: flex-end; }
.tabs button {
  width: 220px;
  height: 76px;
  margin-left: 2px;
  padding-top: 6px;
  border-bottom: 8px solid #35c0d8;
  color: #35b9cd;
  font-size: 24px;
}
.content { grid-column: 1; padding: 25px 7px 0 33px; }
.indent { padding-left: 43px; }
.enable { display: flex; align-items: center; gap: 14px; margin: 18px 0 16px; }
.enable input {
  appearance: none;
  width: 28px;
  height: 28px;
  margin: 0;
  border-radius: 3px;
  background: #2e9ab4;
  display: grid;
  justify-content: center;
}
.enable input::before {
  content: "";
  width: 9px;
  height: 17px;
  margin-top: 3px;
  border: solid #fff;
  border-width: 0 4px 4px 0;
  transform: rotate(42deg);
}
.cloud-id { display: flex; align-items: center; margin-top: 15px; }
.cloud-id .name { width: 254px; }
.rename {
  width: 214px;
  height: 48px;
  margin-left: auto;
  margin-right: 143px;
  border-radius: 6px;
  background: #757575;
  color: #fff;
}
h2 {
  display: flex;
  align-items: center;
  gap: 8px;
  margin: 28px 0 10px -16px;
  color: #fff;
  font-size: 24px;
  font-weight: 600;
}
h2::before, h2::after { content: ""; height: 1px; background: #424242; }
h2::before { width: 16px; }
h2::after { flex: 1; }
.address { display: flex; align-items: center; margin: 15px 0 13px 43px; }
.address .name { width: 199px; }
.address a { color: #3c94a4; text-decoration: underline; }
.address svg { width: 28px; height: 28px; margin-left: 9px; }
.stores { display: grid; grid-template-columns: 1fr 1fr; margin: 14px 19px 0 0; }
.store { display: flex; flex-direction: column; align-items: center; gap: 13px; }
.qr { width: 172px; height: 172px; background: #fff; }
.badge {
  display: flex;
  align-items: center;
  gap: 10px;
  width: 172px;
  height: 46px;
  padding: 0 10px;
  border-radius: 4px 4px 0 0;
  background: #9d9d9d;
  color: #2a2a2a;
  font-family: "Open Sans", sans-serif;
}
.badge-play { gap: 4px; }
.badge svg { height: 34px; }
.badge-text { display: flex; flex-direction: column; white-space: nowrap; }
.badge small { font-size: 13px; line-height: 14px; }
.badge b { font-size: 21px; line-height: 22px; font-weight: 600; }

.scrollbar { grid-column: 2; grid-row: 2; height: 673px; margin-top: 1px; border-radius: 8px; background: #696969; }
.actions { grid-column: 1 / -1; display: flex; justify-content: flex-end; padding-right: 77px; }
.apply {
  position: relative;
  width: 154px;
  height: 53px;
  border-radius: 6px;
  background: #60cbdf;
  color: #fff;
}
.cursor { position: absolute; left: 77px; top: 19px; width: 30px; height: 38px; }
```
